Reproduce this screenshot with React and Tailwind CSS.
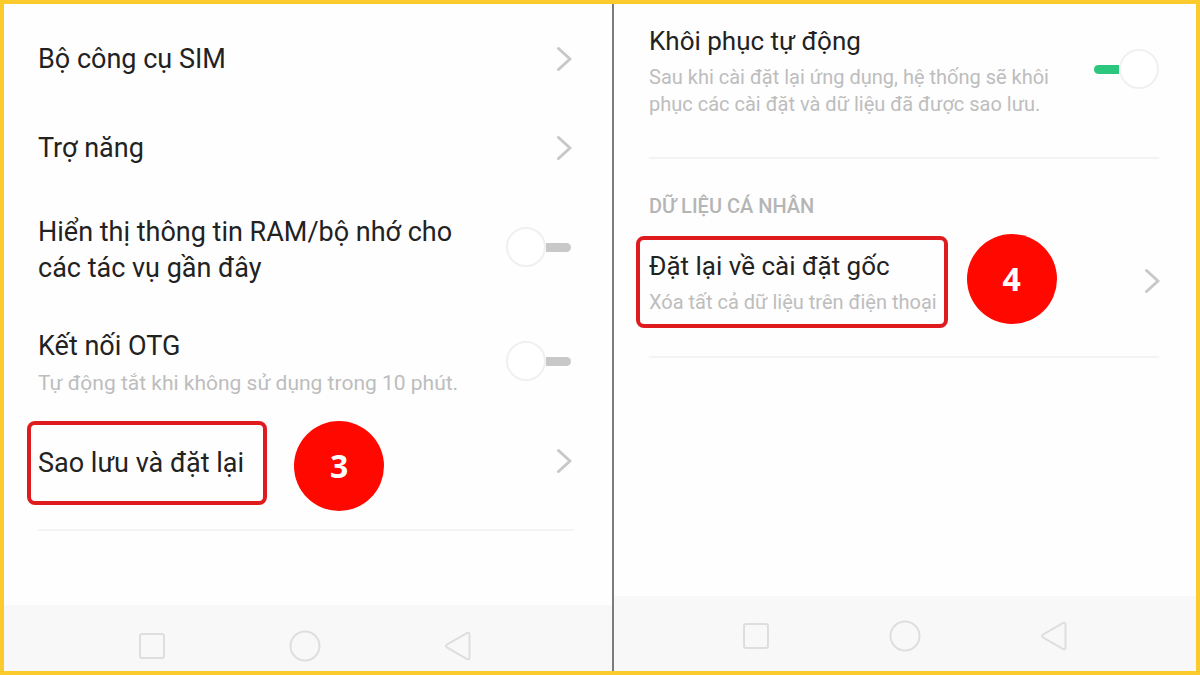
import React from 'react';

const Chevron = () => (
  <svg className="w-4 h-7 shrink-0" viewBox="0 0 16 28" fill="none" stroke="#c8c8c8" strokeWidth="3" strokeLinecap="round" strokeLinejoin="round" aria-hidden="true">
    <path d="M2.5 3.5 L14 14 L2.5 24.5" />
  </svg>
);

const Toggle = ({ id, defaultChecked = false }) => (
  <input
    id={id}
    type="checkbox"
    role="switch"
    defaultChecked={defaultChecked}
    className="appearance-none shrink-0 flex items-center w-[65px] h-10 cursor-pointer checked:flex-row-reverse before:content-[''] before:w-10 before:h-10 before:rounded-full before:border-2 before:border-[#f0f0f0] before:bg-white after:content-[''] after:w-[25px] after:h-[9px] after:bg-[#c8c8c8] after:rounded-r-full checked:after:bg-[#2bc77e] checked:after:rounded-r-none checked:after:rounded-l-full"
  />
);

const Badge = ({ children }) => (
  <span className="w-[90px] h-[90px] shrink-0 rounded-full bg-[#ff0800] text-white font-['Open_Sans',sans-serif] font-bold text-[32px] flex items-center justify-center">
    {children}
  </span>
);

const NavBar = ({ className }) => (
  <nav className={`bg-[#f8f8f8] pl-[22%] flex items-center justify-between ${className}`}>
    <button type="button" aria-label="Gần đây">
      <svg className="w-7 h-8" viewBox="0 0 28 32" fill="none" stroke="#dedede" strokeWidth="2">
        <rect x="2" y="4" width="24" height="24" rx="2" />
      </svg>
    </button>
    <button type="button" aria-label="Trang chủ">
      <svg className="w-8 h-8" viewBox="0 0 32 32" fill="none" stroke="#dedede" strokeWidth="2">
        <circle cx="16" cy="16" r="14.5" />
      </svg>
    </button>
    <button type="button" aria-label="Quay lại">
      <svg className="w-7 h-8" viewBox="0 0 28 32" fill="none" stroke="#dedede" strokeWidth="2" strokeLinejoin="round">
        <path d="M23.2 2.9 L2.8 14.7 Q1.2 16 2.8 17.3 L23.2 29.1 Q25.5 30 25.5 27.5 V4.5 Q25.5 2 23.2 2.9 Z" />
      </svg>
    </button>
  </nav>
);

const LinkRow = ({ title }) => (
  <button type="button" className="w-full h-[89px] pl-[34px] pr-10 flex items-center justify-between text-left">
    <span>{title}</span>
    <Chevron />
  </button>
);

const SettingsScreen = () => (
  <section className="flex flex-col border-r-2 border-[#7c7c7c] text-[27px] leading-9 text-[#222]">
    <div className="flex-1 pt-[10px]">
      <LinkRow title="Bộ công cụ SIM" />
      <LinkRow title="Trợ năng" />
      <div className="pl-[34px] pr-[41px] pt-[22px] flex items-start justify-between">
        <label htmlFor="ram" className="w-[440px]">
          Hiển thị thông tin RAM/bộ nhớ cho các tác vụ gần đây
        </label>
        <div className="pt-[13px]">
          <Toggle id="ram" />
        </div>
      </div>
      <div className="pl-[34px] pr-[41px] pt-[42px] flex items-start justify-between">
        <label htmlFor="otg">
          <span className="block">Kết nối OTG</span>
          <span className="block mt-[6px] text-[21px] leading-[27px] text-[#bdbdbd]">
            Tự động tắt khi không sử dụng trong 10 phút.
          </span>
        </label>
        <div className="pt-[13px]">
          <Toggle id="otg" />
        </div>
      </div>
      <button type="button" className="w-full mt-6 pl-[23px] pr-10 flex items-start text-left">
        <span className="border-4 border-[#e01b1e] rounded-lg pl-[7px] pr-[19px] py-5">
          Sao lưu và đặt lại
        </span>
        <span className="ml-[27px]">
          <Badge>3</Badge>
        </span>
        <span className="ml-auto pt-[26px]">
          <Chevron />
        </span>
      </button>
      <hr className="mt-[18px] ml-[34px] mr-[38px] border-t-2 border-[#f3f3f3]" />
    </div>
    <NavBar className="h-[66px] pt-4 pr-[23%]" />
  </section>
);

const BackupScreen = () => (
  <section className="flex flex-col text-[26px] leading-9 text-[#222]">
    <div className="flex-1 pt-[19px]">
      <div className="pl-[35px] pr-[37px] flex items-start justify-between">
        <label htmlFor="restore" className="w-[410px]">
          <span className="block">Khôi phục tự động</span>
          <span className="block mt-[5px] text-[20px] leading-[27px] text-[#bdbdbd]">
            Sau khi cài đặt lại ứng dụng, hệ thống sẽ khôi phục các cài đặt và dữ liệu đã được sao lưu.
          </span>
        </label>
        <div className="pt-[26px]">
          <Toggle id="restore" defaultChecked />
        </div>
      </div>
      <hr className="mt-[39px] ml-[35px] mr-[37px] border-t-2 border-[#f3f3f3]" />
      <h2 className="mt-[33px] pl-[35px] text-[20px] leading-7 font-medium text-[#b5b5b5]">DỮ LIỆU CÁ NHÂN</h2>
      <button type="button" className="w-full mt-[14px] pl-[22px] pr-9 flex items-start text-left">
        <span className="mt-[2px] border-4 border-[#e01b1e] rounded-lg pl-[9px] pr-[7px] py-2">
          <span className="block">Đặt lại về cài đặt gốc</span>
          <span className="block mt-[5px] text-[20px] leading-[27px] text-[#bdbdbd]">
            Xóa tất cả dữ liệu trên điện thoại
          </span>
        </span>
        <span className="ml-[19px]">
          <Badge>4</Badge>
        </span>
        <span className="ml-auto pt-[33px]">
          <Chevron />
        </span>
      </button>
      <hr className="mt-7 ml-[35px] mr-[37px] border-t-2 border-[#f3f3f3]" />
    </div>
    <NavBar className="h-[75px] pt-1 pr-[22%]" />
  </section>
);

const App = () => {
  return (
    <main className="min-h-screen border-4 border-[#fbcb2e] bg-[#fefefe] grid grid-cols-[610fr_582fr] font-[Roboto,sans-serif]">
      <SettingsScreen />
      <BackupScreen />
    </main>
  );
};

export default App;
